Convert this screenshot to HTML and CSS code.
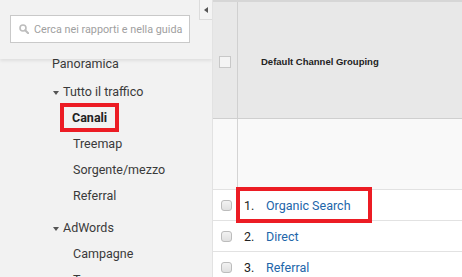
FILE: index.html
```html
<!DOCTYPE html>
<html lang="it">
  <head>
    <meta charset="UTF-8" />
    <meta name="viewport" content="width=device-width, initial-scale=1.0" />
    <title>Canali</title>
    <link rel="stylesheet" href="styles.css">
  </head>
  <body>
    <div class="page">
      <div class="sidebar">
        <div class="search-bar">
          <div class="search">
            <svg class="search-icon" width="10" height="10" viewBox="0 0 10 10">
              <circle cx="4" cy="4" r="3" fill="none" stroke="#bdbdbd" stroke-width="1.6"/>
              <path d="M6.2 6.2 L9.2 9.2" stroke="#bdbdbd" stroke-width="2" stroke-linecap="round"/>
            </svg>
            <span class="placeholder">Cerca nei rapporti e nella guida</span>
          </div>
          <div class="collapse"><span class="tri-left"></span></div>
        </div>
        <ul class="nav">
          <li class="item top">Panoramica</li>
          <li class="item group"><span class="tri-down"></span>Tutto il traffico</li>
          <li class="item sub"><span class="hl-nav">Canali</span></li>
          <li class="item sub">Treemap</li>
          <li class="item sub">Sorgente/mezzo</li>
          <li class="item sub">Referral</li>
          <li class="item group gap"><span class="tri-down"></span>AdWords</li>
          <li class="item sub">Campagne</li>
          <li class="item sub">Treemap</li>
        </ul>
      </div>

      <div class="main">
        <div class="head">
          <div class="cb-col"><span class="cb-square"></span></div>
          <div class="head-title">Default Channel Grouping</div>
        </div>
        <div class="blank">
          <div class="cb-col"></div>
          <div></div>
        </div>
        <div class="row">
          <div class="cb-cell"><span class="cb"></span></div>
          <div class="hl-row"><span class="num">1.</span><span class="link">Organic Search</span></div>
        </div>
        <div class="row">
          <div class="cb-cell"><span class="cb"></span></div>
          <div class="plain"><span class="num">2.</span><span class="link">Direct</span></div>
        </div>
        <div class="row">
          <div class="cb-cell"><span class="cb"></span></div>
          <div class="plain"><span class="num">3.</span><span class="link">Referral</span></div>
        </div>
      </div>
    </div>
  </body>
</html>
```

FILE: styles.css
```css
body {
  margin: 0;
  font-family: Roboto, "Liberation Sans", sans-serif;
  background: #fff;
  overflow: hidden;
}

.page {
  display: flex;
  height: 277px;
}

/* sidebar */
.sidebar {
  width: 212px;
  flex: none;
  background: #f2f2f2;
  overflow: hidden;
}
.search-bar {
  position: relative;
  z-index: 2;
  height: 59px;
  padding: 15px 0 0 10px;
  box-sizing: border-box;
  background: #f2f2f2;
  box-shadow: 0 2px 3px rgba(0, 0, 0, 0.08);
}
.search {
  display: flex;
  align-items: center;
  width: 180px;
  height: 28px;
  box-sizing: border-box;
  border: 1px solid #c9c9c9;
  background: #fff;
  padding-left: 8px;
  overflow: hidden;
}
.search-icon {
  flex: none;
  margin-right: 5px;
}
.placeholder {
  font-size: 10.8px;
  color: #a0a0a0;
  white-space: nowrap;
}
.collapse {
  position: absolute;
  top: 0;
  right: 0;
  width: 13px;
  height: 20px;
  box-sizing: border-box;
  border-left: 1px solid #dcdcdc;
  border-bottom: 1px solid #dcdcdc;
  background: #f4f4f4;
  display: flex;
  align-items: center;
  justify-content: center;
}
.tri-left {
  width: 0;
  height: 0;
  border-top: 3px solid transparent;
  border-bottom: 3px solid transparent;
  border-right: 4px solid #555;
}

.nav {
  list-style: none;
  margin: -8px 0 0 0;
  padding: 0;
  font-size: 12.5px;
  color: #3a3a3a;
}
.item {
  line-height: 26px;
  height: 26px;
  white-space: nowrap;
}
.top {
  padding-left: 52px;
}
.group {
  padding-left: 53px;
  margin-top: 2px;
}
.group.gap {
  margin-top: 6px;
}
.sub {
  padding-left: 73px;
}
.tri-down {
  display: inline-block;
  vertical-align: middle;
  width: 0;
  height: 0;
  margin-right: 4px;
  border-left: 3px solid transparent;
  border-right: 3px solid transparent;
  border-top: 4px solid #555;
}
.hl-nav {
  display: inline-block;
  line-height: 21px;
  padding: 0 8px;
  margin-left: -9px;
  font-weight: bold;
  color: #222;
  outline: 4px solid #ec1c24;
}

/* table */
.main {
  flex: 1;
  border-left: 1px solid #e2e2e2;
  font-size: 12.5px;
}
.head {
  display: flex;
  height: 119px;
  box-sizing: border-box;
  border-top: 2px solid #d6d6d6;
  border-bottom: 1px solid #cfcfcf;
  background: #e8e8e8;
}
.cb-col {
  width: 24px;
  flex: none;
  border-right: 1px solid #d0d0d0;
  display: flex;
  align-items: center;
  justify-content: center;
}
.cb-square {
  width: 12px;
  height: 12px;
  box-sizing: border-box;
  border: 1px solid #c8c8c8;
  background: #f4f4f4;
  margin-top: 3px;
}
.head-title {
  display: flex;
  align-items: center;
  padding-left: 23px;
  padding-top: 3px;
  font-family: "Liberation Sans", Arial, sans-serif;
  font-weight: bold;
  font-size: 9.5px;
  color: #222;
}
.blank {
  display: flex;
  height: 71px;
  box-sizing: border-box;
  background: #f9f9f9;
  border-bottom: 1px solid #e2e2e2;
}
.blank .cb-col {
  border-right-color: #d4d4d4;
}
.row {
  display: flex;
  align-items: center;
  height: 31px;
  box-sizing: border-box;
  border-bottom: 1px solid #e2e2e2;
  background: #fff;
}
.cb-cell {
  width: 25px;
  flex: none;
  display: flex;
  justify-content: center;
}
.cb {
  width: 11px;
  height: 11px;
  box-sizing: border-box;
  border: 1px solid #bcbcbc;
  border-radius: 3px;
  background: linear-gradient(#f2f2f2, #e0e0e0);
  margin-left: 1px;
}
.num {
  display: inline-block;
  width: 22px;
  color: #222;
}
.link {
  color: #2266aa;
}
.plain {
  padding-left: 6px;
}
.hl-row {
  display: flex;
  align-items: center;
  height: 28px;
  margin-left: 2px;
  padding-left: 4px;
  width: 128px;
  box-sizing: border-box;
  outline: 4px solid #ec1c24;
  outline-offset: 0;
}
```
